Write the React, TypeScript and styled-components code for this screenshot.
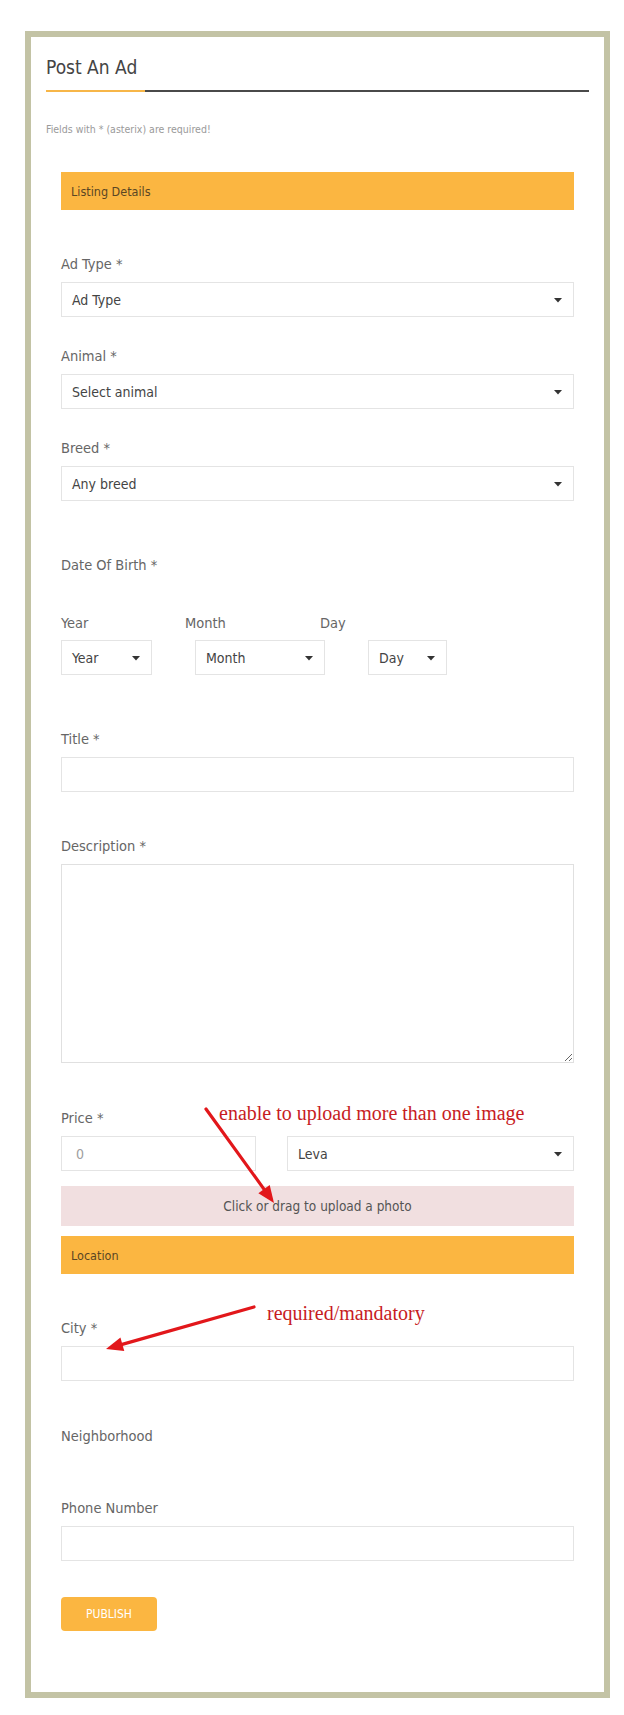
import React from "react";
import styled, { createGlobalStyle } from "styled-components";

const NARROW = `"Liberation Sans Narrow", "Arial Narrow", "DejaVu Sans Condensed", "Liberation Sans", sans-serif`;

const GlobalStyle = createGlobalStyle`
  body {
    margin: 0;
    background: #ffffff;
    font-family: ${NARROW};
  }
  * {
    box-sizing: border-box;
  }
`;

type Arrow = { x1: number; y1: number; x2: number; y2: number };

// annotation arrows, in card coordinates
const ARROWS: Arrow[] = [
  { x1: 175, y1: 1072, x2: 243, y2: 1166 },
  { x1: 223, y1: 1270, x2: 75, y2: 1312 },
];

function arrowHead({ x1, y1, x2, y2 }: Arrow) {
  const len = Math.hypot(x2 - x1, y2 - y1);
  const ux = (x2 - x1) / len;
  const uy = (y2 - y1) / len;
  const bx = x2 - ux * 17;
  const by = y2 - uy * 17;
  const px = -uy * 7;
  const py = ux * 7;
  return {
    line: { x2: bx + ux * 2, y2: by + uy * 2 },
    points: `${x2},${y2} ${bx + px},${by + py} ${bx - px},${by - py}`,
  };
}

function Caret() {
  return (
    <CaretIcon viewBox="0 0 8 5" width="8" height="5">
      <polygon points="0,0 8,0 4,4.5" fill="#333" />
    </CaretIcon>
  );
}

function Select({ value, width }: { value: string; width?: number }) {
  return (
    <SelectBox $width={width}>
      <span>{value}</span>
      <Caret />
    </SelectBox>
  );
}

export default function App() {
  return (
    <>
      <GlobalStyle />
      <Card>
        <Header>
          <Title>Post An Ad</Title>
          <Rule>
            <RuleAccent />
            <RuleLine />
          </Rule>
        </Header>

        <Note>Fields with * (asterix) are required!</Note>

        <Form>
          <SectionBar>Listing Details</SectionBar>

          <Group $mt={44}>
            <Label>Ad Type *</Label>
            <Select value="Ad Type" />
          </Group>

          <Group $mt={29}>
            <Label>Animal *</Label>
            <Select value="Select animal" />
          </Group>

          <Group $mt={29}>
            <Label>Breed *</Label>
            <Select value="Any breed" />
          </Group>

          <Group $mt={54}>
            <Label>Date Of Birth *</Label>
          </Group>

          <Group $mt={38}>
            <DateLabels>
              <DateLabel $width={124}>Year</DateLabel>
              <DateLabel $width={135}>Month</DateLabel>
              <DateLabel>Day</DateLabel>
            </DateLabels>
            <DateSelects>
              <Select value="Year" width={91} />
              <Select value="Month" width={130} />
              <Select value="Day" width={79} />
            </DateSelects>
          </Group>

          <Group $mt={54}>
            <Label>Title *</Label>
            <TextInput type="text" />
          </Group>

          <Group $mt={44}>
            <Label>Description *</Label>
            <TextArea />
          </Group>

          <Group $mt={45}>
            <Label>Price *</Label>
            <PriceRow>
              <TextInput type="text" placeholder="0" $indent={14} />
              <Select value="Leva" />
            </PriceRow>
          </Group>

          <UploadBox>Click or drag to upload a photo</UploadBox>

          <SectionBar $mt={10}>Location</SectionBar>

          <Group $mt={44}>
            <Label>City *</Label>
            <TextInput type="text" />
          </Group>

          <Group $mt={45}>
            <Label>Neighborhood</Label>
          </Group>

          <Group $mt={52}>
            <Label>Phone Number</Label>
            <TextInput type="text" />
          </Group>

          <PublishButton type="button">Publish</PublishButton>
        </Form>

        <Overlay>
          {ARROWS.map((a, i) => {
            const head = arrowHead(a);
            return (
              <g key={i}>
                <line
                  x1={a.x1}
                  y1={a.y1}
                  x2={head.line.x2}
                  y2={head.line.y2}
                  stroke="#e2171b"
                  strokeWidth="3.2"
                  strokeLinecap="round"
                />
                <polygon points={head.points} fill="#e2171b" />
              </g>
            );
          })}
        </Overlay>
        <Annotation $left={188} $top={1066}>
          enable to upload more than one image
        </Annotation>
        <Annotation $left={236} $top={1266}>
          required/mandatory
        </Annotation>
      </Card>
    </>
  );
}

const Card = styled.div`
  position: relative;
  width: 585px;
  margin: 31px 0 0 25px;
  border: 6px solid #c3c3a5;
  background: #ffffff;
  padding-bottom: 61px;
`;

const Header = styled.div`
  padding: 17px 15px 0;
`;

const Title = styled.h1`
  margin: 0;
  font-size: 19px;
  line-height: 26px;
  font-weight: normal;
  color: #444444;
`;

const Rule = styled.div`
  display: flex;
  height: 2px;
  margin-top: 10px;
`;

const RuleAccent = styled.div`
  width: 99px;
  background: #f7b648;
`;

const RuleLine = styled.div`
  flex: 1;
  background: #4a4a4a;
`;

const Note = styled.p`
  margin: 29px 0 0;
  padding-left: 15px;
  font-size: 10.5px;
  line-height: 16px;
  color: #9a9a9a;
`;

const Form = styled.form`
  margin-top: 35px;
  padding: 0 30px;
`;

const SectionBar = styled.div<{ $mt?: number }>`
  display: flex;
  align-items: center;
  height: 38px;
  margin-top: ${(p) => p.$mt ?? 0}px;
  padding-left: 10px;
  background: #fbb641;
  font-size: 12.5px;
  color: #5a4624;
`;

const Group = styled.div<{ $mt: number }>`
  margin-top: ${(p) => p.$mt}px;
`;

const Label = styled.label`
  display: block;
  margin-bottom: 8px;
  font-size: 14.5px;
  line-height: 20px;
  color: #666666;
`;

const SelectBox = styled.div<{ $width?: number }>`
  display: flex;
  align-items: center;
  justify-content: space-between;
  width: ${(p) => (p.$width ? `${p.$width}px` : "100%")};
  height: 35px;
  padding: 0 11px 0 10px;
  border: 1px solid #e4e4e4;
  background: #ffffff;
  font-size: 14px;
  color: #444444;
`;

const CaretIcon = styled.svg`
  flex-shrink: 0;
  margin-top: 2px;
`;

const DateLabels = styled.div`
  display: flex;
`;

const DateLabel = styled.span<{ $width?: number }>`
  width: ${(p) => (p.$width ? `${p.$width}px` : "auto")};
  font-size: 14.5px;
  line-height: 20px;
  color: #666666;
`;

const DateSelects = styled.div`
  display: flex;
  margin-top: 7px;

  & > :nth-child(2) {
    margin-left: 43px;
  }

  & > :nth-child(3) {
    margin-left: 43px;
  }
`;

const TextInput = styled.input<{ $indent?: number }>`
  display: block;
  width: 100%;
  height: 35px;
  margin: 0;
  padding: 0 0 0 ${(p) => p.$indent ?? 10}px;
  border: 1px solid #e4e4e4;
  border-radius: 0;
  outline: none;
  background: #ffffff;
  font-family: ${NARROW};
  font-size: 14px;
  color: #444444;

  &::placeholder {
    color: #a0a0a0;
  }
`;

const TextArea = styled.textarea`
  display: block;
  width: 100%;
  height: 199px;
  margin: 0;
  border: 1px solid #e0e0e0;
  border-radius: 0;
  outline: none;
  font-family: ${NARROW};
  font-size: 14px;
`;

const PriceRow = styled.div`
  display: grid;
  grid-template-columns: 195px 1fr;
  column-gap: 31px;
`;

const UploadBox = styled.div`
  display: flex;
  align-items: center;
  justify-content: center;
  height: 40px;
  margin-top: 15px;
  background: #f1dfe0;
  font-size: 13.5px;
  color: #555555;
`;

const PublishButton = styled.button`
  display: block;
  width: 96px;
  height: 34px;
  margin-top: 36px;
  padding: 0;
  border: none;
  border-radius: 4px;
  background: #fbb641;
  font-family: ${NARROW};
  font-size: 12px;
  text-transform: uppercase;
  color: #ffffff;
`;

const Overlay = styled.svg`
  position: absolute;
  left: 0;
  top: 0;
  width: 100%;
  height: 100%;
  overflow: visible;
  pointer-events: none;
`;

const Annotation = styled.span<{ $left: number; $top: number }>`
  position: absolute;
  left: ${(p) => p.$left}px;
  top: ${(p) => p.$top}px;
  font-family: "Liberation Serif", "Times New Roman", serif;
  font-size: 20px;
  line-height: 20px;
  white-space: nowrap;
  color: #c71c1f;
`;
